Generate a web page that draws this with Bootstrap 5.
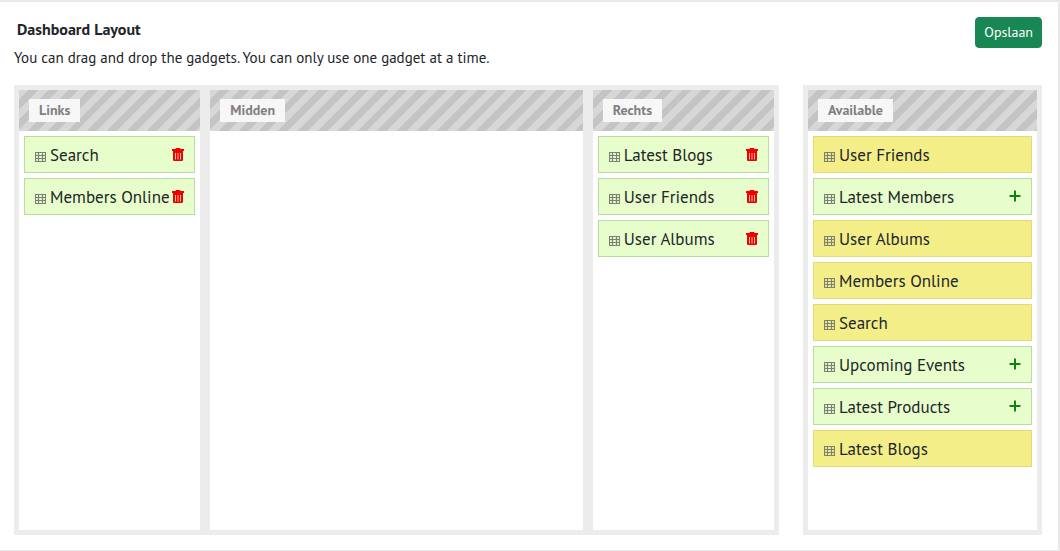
<!DOCTYPE html>
<html lang="nl">
<head>
<meta charset="utf-8">
<meta name="viewport" content="width=device-width, initial-scale=1">
<title>Dashboard Layout</title>
<link href="https://cdn.jsdelivr.net/npm/bootstrap@5.3.0/dist/css/bootstrap.min.css" rel="stylesheet">
<style>
  body { font-family: "PT Sans", "Open Sans", sans-serif; font-size: 15px; line-height: 24px; color: #212529; background: #fff; }
  .panel { border: solid #e9e9e9; border-width: 2px 2px 1px 0; padding: 15px 16px 15px 14px; }
  .panel-title { font-size: 16px; line-height: 24px; margin: 0 0 5px 3px; }
  .save { font-size: 14px; line-height: 21px; padding: 4px 8px; border-radius: 4px; }
  .boards { --bs-gutter-x: 24px; padding-top: 15px; }
  .board { background: #ececec; padding: 5px 0; --bs-gutter-x: 10px; }
  .zone { background: #fff; min-height: 440px; }
  .zone-head { height: 41px; padding: 9px 10px; background: repeating-linear-gradient(135deg, #d7d7d7 0 7px, #c4c4c4 7px 14px); }
  .zone-name { background: #f7f7f7; color: #808080; font-size: 14px; line-height: 23px; padding: 0 10px; margin: 0; }
  .gadgets { padding: 5px; gap: 5px; }
  .gadget { height: 37px; padding: 0 10px; border: 1px solid #b9dca0; background: #e7fdcb; font-size: 17px; white-space: nowrap; }
  .gadget.used { background: #f4ee89; border-color: #e3da7c; }
  .grip { width: 11px; height: 10px; margin: 4px 4px 0 0; color: #7c8174; flex: none; }
  .act { border: 0; background: none; padding: 0; margin: 0; }
  .del { color: #f00000; }
  .add { color: #0c850c; margin-bottom: 2px; }
</style>
<script src="https://cdn.jsdelivr.net/npm/bootstrap@5.3.0/dist/js/bootstrap.bundle.min.js"></script>
</head>
<body>
<svg class="d-none">
  <symbol id="grid" viewBox="0 0 11 10"><path d="M.5.5h10v9H.5zM3.500.5v9M7.500.5v9M.5 3.500h10M.5 6.500h10" fill="none" stroke="currentColor" stroke-width="1.200"/></symbol>
  <symbol id="trash" viewBox="0 0 12 14"><path fill="currentColor" fill-rule="evenodd" d="M4 0h4l.6 1H12v2H0V1h3.400zM1 3h10v9q0 1-1 1H2q-1 0-1-1zM3.200 5v6.500h.8V5zm2.400 0v6.500h.8V5zM8 5v6.500h.8V5z"/></symbol>
  <symbol id="plus" viewBox="0 0 12 12"><path d="M6 .5v11M.5 6h11" stroke="currentColor" stroke-width="2"/></symbol>
</svg>
<main class="panel">
  <header class="d-flex justify-content-between align-items-start">
    <div>
      <h1 class="panel-title fw-bold">Dashboard Layout</h1>
      <p class="mb-0">You can drag and drop the gadgets. You can only use one gadget at a time.</p>
    </div>
    <button type="button" class="btn btn-success save">Opslaan</button>
  </header>
  <div class="row boards">
    <div class="col-9">
      <div class="row board mx-0">
        <div class="col-3">
          <section class="zone">
            <div class="zone-head d-flex align-items-start"><h2 class="zone-name fw-bold">Links</h2></div>
            <ul class="gadgets list-unstyled d-flex flex-column mb-0">
              <li class="gadget d-flex align-items-center"><svg class="grip"><use href="#grid"/></svg>Search<button type="button" class="act del d-flex ms-auto" aria-label="Remove Search"><svg width="12" height="14"><use href="#trash"/></svg></button></li>
              <li class="gadget d-flex align-items-center"><svg class="grip"><use href="#grid"/></svg>Members Online<button type="button" class="act del d-flex ms-auto" aria-label="Remove Members Online"><svg width="12" height="14"><use href="#trash"/></svg></button></li>
            </ul>
          </section>
        </div>
        <div class="col-6">
          <section class="zone h-100">
            <div class="zone-head d-flex align-items-start"><h2 class="zone-name fw-bold">Midden</h2></div>
          </section>
        </div>
        <div class="col-3">
          <section class="zone">
            <div class="zone-head d-flex align-items-start"><h2 class="zone-name fw-bold">Rechts</h2></div>
            <ul class="gadgets list-unstyled d-flex flex-column mb-0">
              <li class="gadget d-flex align-items-center"><svg class="grip"><use href="#grid"/></svg>Latest Blogs<button type="button" class="act del d-flex ms-auto" aria-label="Remove Latest Blogs"><svg width="12" height="14"><use href="#trash"/></svg></button></li>
              <li class="gadget d-flex align-items-center"><svg class="grip"><use href="#grid"/></svg>User Friends<button type="button" class="act del d-flex ms-auto" aria-label="Remove User Friends"><svg width="12" height="14"><use href="#trash"/></svg></button></li>
              <li class="gadget d-flex align-items-center"><svg class="grip"><use href="#grid"/></svg>User Albums<button type="button" class="act del d-flex ms-auto" aria-label="Remove User Albums"><svg width="12" height="14"><use href="#trash"/></svg></button></li>
            </ul>
          </section>
        </div>
      </div>
    </div>
    <div class="col-3">
      <div class="row board mx-0">
        <div class="col-12">
          <section class="zone">
            <div class="zone-head d-flex align-items-start"><h2 class="zone-name fw-bold">Available</h2></div>
            <ul class="gadgets list-unstyled d-flex flex-column mb-0">
              <li class="gadget used d-flex align-items-center"><svg class="grip"><use href="#grid"/></svg>User Friends</li>
              <li class="gadget d-flex align-items-center"><svg class="grip"><use href="#grid"/></svg>Latest Members<button type="button" class="act add d-flex ms-auto" aria-label="Add Latest Members"><svg width="12" height="12"><use href="#plus"/></svg></button></li>
              <li class="gadget used d-flex align-items-center"><svg class="grip"><use href="#grid"/></svg>User Albums</li>
              <li class="gadget used d-flex align-items-center"><svg class="grip"><use href="#grid"/></svg>Members Online</li>
              <li class="gadget used d-flex align-items-center"><svg class="grip"><use href="#grid"/></svg>Search</li>
              <li class="gadget d-flex align-items-center"><svg class="grip"><use href="#grid"/></svg>Upcoming Events<button type="button" class="act add d-flex ms-auto" aria-label="Add Upcoming Events"><svg width="12" height="12"><use href="#plus"/></svg></button></li>
              <li class="gadget d-flex align-items-center"><svg class="grip"><use href="#grid"/></svg>Latest Products<button type="button" class="act add d-flex ms-auto" aria-label="Add Latest Products"><svg width="12" height="12"><use href="#plus"/></svg></button></li>
              <li class="gadget used d-flex align-items-center"><svg class="grip"><use href="#grid"/></svg>Latest Blogs</li>
            </ul>
          </section>
        </div>
      </div>
    </div>
  </div>
</main>
</body>
</html>
